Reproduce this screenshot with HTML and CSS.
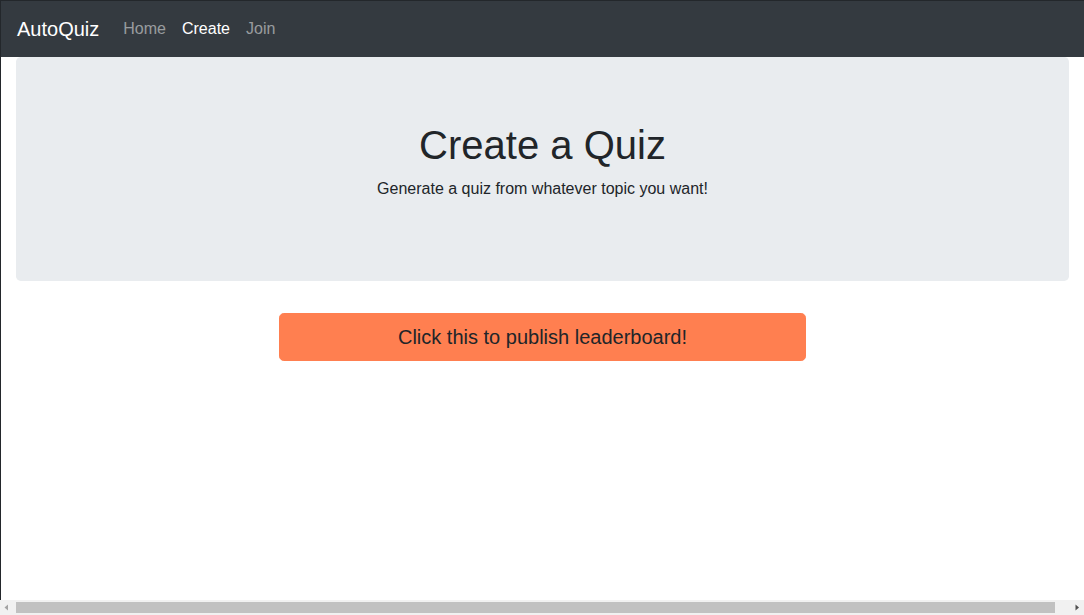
FILE: index.html
```html
<!DOCTYPE html>
<html lang="en">
<head>
<meta charset="utf-8">
<title>AutoQuiz - Create</title>
<link rel="stylesheet" href="styles.css">
</head>
<body>
<div class="page">
  <nav class="navbar">
    <a class="brand" href="#">AutoQuiz</a>
    <ul class="nav">
      <li><a class="nav-link" href="#">Home</a></li>
      <li><a class="nav-link active" href="#">Create</a></li>
      <li><a class="nav-link" href="#">Join</a></li>
    </ul>
  </nav>
  <main class="container">
    <section class="jumbotron">
      <h1 class="title">Create a Quiz</h1>
      <p class="lead">Generate a quiz from whatever topic you want!</p>
    </section>
    <div class="actions">
      <button class="btn-publish" type="button">Click this to publish leaderboard!</button>
    </div>
  </main>
</div>
<div class="hscroll" aria-hidden="true">
  <span class="sb-btn">
    <svg width="15" height="15" viewBox="0 0 15 15"><path d="M8 4.5 L4.5 7.5 L8 10.5 Z" fill="#a3a3a3"/></svg>
  </span>
  <span class="sb-track"><span class="sb-thumb"></span></span>
  <span class="sb-btn">
    <svg width="15" height="15" viewBox="0 0 15 15"><path d="M6.5 4.5 L10 7.5 L6.5 10.5 Z" fill="#505050"/></svg>
  </span>
</div>
</body>
</html>
```

FILE: styles.css
```css
* { box-sizing: border-box; }
html, body { margin: 0; padding: 0; }
body {
  font-family: "Liberation Sans", Arial, sans-serif;
  font-size: 16px;
  line-height: 1.5;
  color: #212529;
  background: #fff;
}
.page {
  border-top: 1px solid #23272b;
  border-left: 1px solid #23272b;
  min-height: calc(100vh - 15px);
}
.navbar {
  display: flex;
  align-items: center;
  height: 56px;
  padding: 8px 16px;
  background: #343a40;
}
.brand {
  font-size: 20px;
  line-height: 30px;
  padding: 5px 0;
  margin-right: 16px;
  color: #fff;
  text-decoration: none;
}
.nav {
  display: flex;
  list-style: none;
  margin: 0;
  padding: 0;
}
.nav-link {
  display: block;
  padding: 8px;
  color: rgba(255, 255, 255, 0.5);
  text-decoration: none;
}
.nav-link.active { color: #fff; }
.container {
  padding: 0 15px;
}
.jumbotron {
  background: #e9ecef;
  border-radius: 4.8px;
  padding: 64px 32px;
  margin-bottom: 32px;
  text-align: center;
}
.title {
  margin: 0 0 8px;
  font-size: 40px;
  font-weight: 400;
  line-height: 1.2;
}
.lead {
  margin: 0 0 16px;
  font-size: 16px;
}
.actions {
  display: flex;
  justify-content: center;
}
.btn-publish {
  width: 50%;
  font-family: inherit;
  font-size: 20px;
  line-height: 1.5;
  padding: 8px 16px;
  color: #212529;
  background: #ff7f50;
  border: 1px solid #ff7f50;
  border-radius: 4.8px;
  cursor: pointer;
}

/* horizontal scrollbar overlay */
.hscroll {
  position: fixed;
  left: 0;
  right: 0;
  bottom: 0;
  height: 15px;
  display: flex;
  background: #f1f1f1;
}
.sb-btn {
  flex: 0 0 15px;
  display: flex;
}
.sb-track {
  flex: 1;
  display: flex;
  align-items: center;
  padding-left: 1px;
  padding-right: 14px;
}
.sb-thumb {
  flex: 1;
  height: 11px;
  background: #c1c1c1;
}
```
